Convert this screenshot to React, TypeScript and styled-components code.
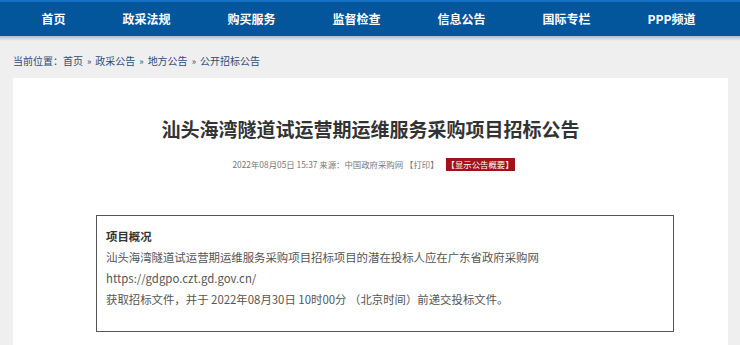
import styled, { createGlobalStyle } from "styled-components";

const GlobalStyle = createGlobalStyle`
  html, body {
    margin: 0;
    padding: 0;
    background: #efefef;
    font-family: "Noto Sans CJK SC", "Noto Sans", sans-serif;
  }
`;

const navItems = ["首页", "政采法规", "购买服务", "监督检查", "信息公告", "国际专栏", "PPP频道"];
const crumbs = ["首页", "政采公告", "地方公告", "公开招标公告"];

function App() {
  return (
    <Page>
      <GlobalStyle />
      <NavBar>
        {navItems.map((item) => (
          <NavItem key={item}>{item}</NavItem>
        ))}
      </NavBar>
      <Shadow />
      <Breadcrumb>
        当前位置：
        {crumbs.map((c, i) => (
          <span key={c}>
            {i > 0 && <Sep>»</Sep>}
            {c}
          </span>
        ))}
      </Breadcrumb>
      <Card>
        <Title>汕头海湾隧道试运营期运维服务采购项目招标公告</Title>
        <Meta>
          <span>2022年08月05日 15:37 来源：中国政府采购网</span>
          <span>【打印】</span>
          <Badge>【显示公告概要】</Badge>
        </Meta>
        <Summary>
          <SummaryTitle>项目概况</SummaryTitle>
          <Line>汕头海湾隧道试运营期运维服务采购项目招标项目的潜在投标人应在广东省政府采购网</Line>
          <Line>https://gdgpo.czt.gd.gov.cn/</Line>
          <Line>获取招标文件，并于 2022年08月30日 10时00分 （北京时间）前递交投标文件。</Line>
        </Summary>
      </Card>
    </Page>
  );
}

export default App;

const Page = styled.div`
  width: 740px;
  height: 345px;
  overflow: hidden;
`;

const NavBar = styled.div`
  display: flex;
  height: 34px;
  padding-left: 13px;
  background: #03559c;
  border-top: 2px solid #1470c4;
`;

const NavItem = styled.div`
  padding: 0 28.5px;
  line-height: 34px;
  color: #fff;
  font-size: 12px;
  font-weight: 700;
  white-space: nowrap;
`;

const Shadow = styled.div`
  height: 5px;
  background: linear-gradient(#a9bfd6, #efefef);
`;

const Breadcrumb = styled.div`
  padding: 13px 13px 0;
  height: 24px;
  font-size: 10px;
  line-height: 14px;
  color: #2f4d78;
`;

const Sep = styled.span`
  margin: 0 4px;
  font-size: 9px;
`;

const Card = styled.div`
  margin: 0 12px 0 13px;
  background: #fff;
  padding: 36px 0 40px;
  min-height: 300px;
`;

const Title = styled.h1`
  margin: 0;
  text-align: center;
  font-size: 19px;
  line-height: 30px;
  font-weight: 700;
  color: #333;
`;

const Meta = styled.div`
  margin-top: 14px;
  display: flex;
  justify-content: center;
  align-items: center;
  gap: 2px;
  font-size: 8.4px;
  line-height: 13px;
  color: #777;
  padding-left: 6px;
`;

const Badge = styled.span`
  background: #a3121a;
  color: #fff;
  padding: 0 1px;
  margin-left: 5px;
`;

const Summary = styled.div`
  box-sizing: border-box;
  margin: 44px 0 0 83px;
  width: 578px;
  height: 117px;
  border: 1px solid #555;
  padding: 9px 0 0 9px;
`;

const SummaryTitle = styled.div`
  font-size: 11.4px;
  font-weight: 700;
  color: #333;
  line-height: 22px;
`;

const Line = styled.div`
  font-size: 11.4px;
  color: #555;
  line-height: 21px;
`;
